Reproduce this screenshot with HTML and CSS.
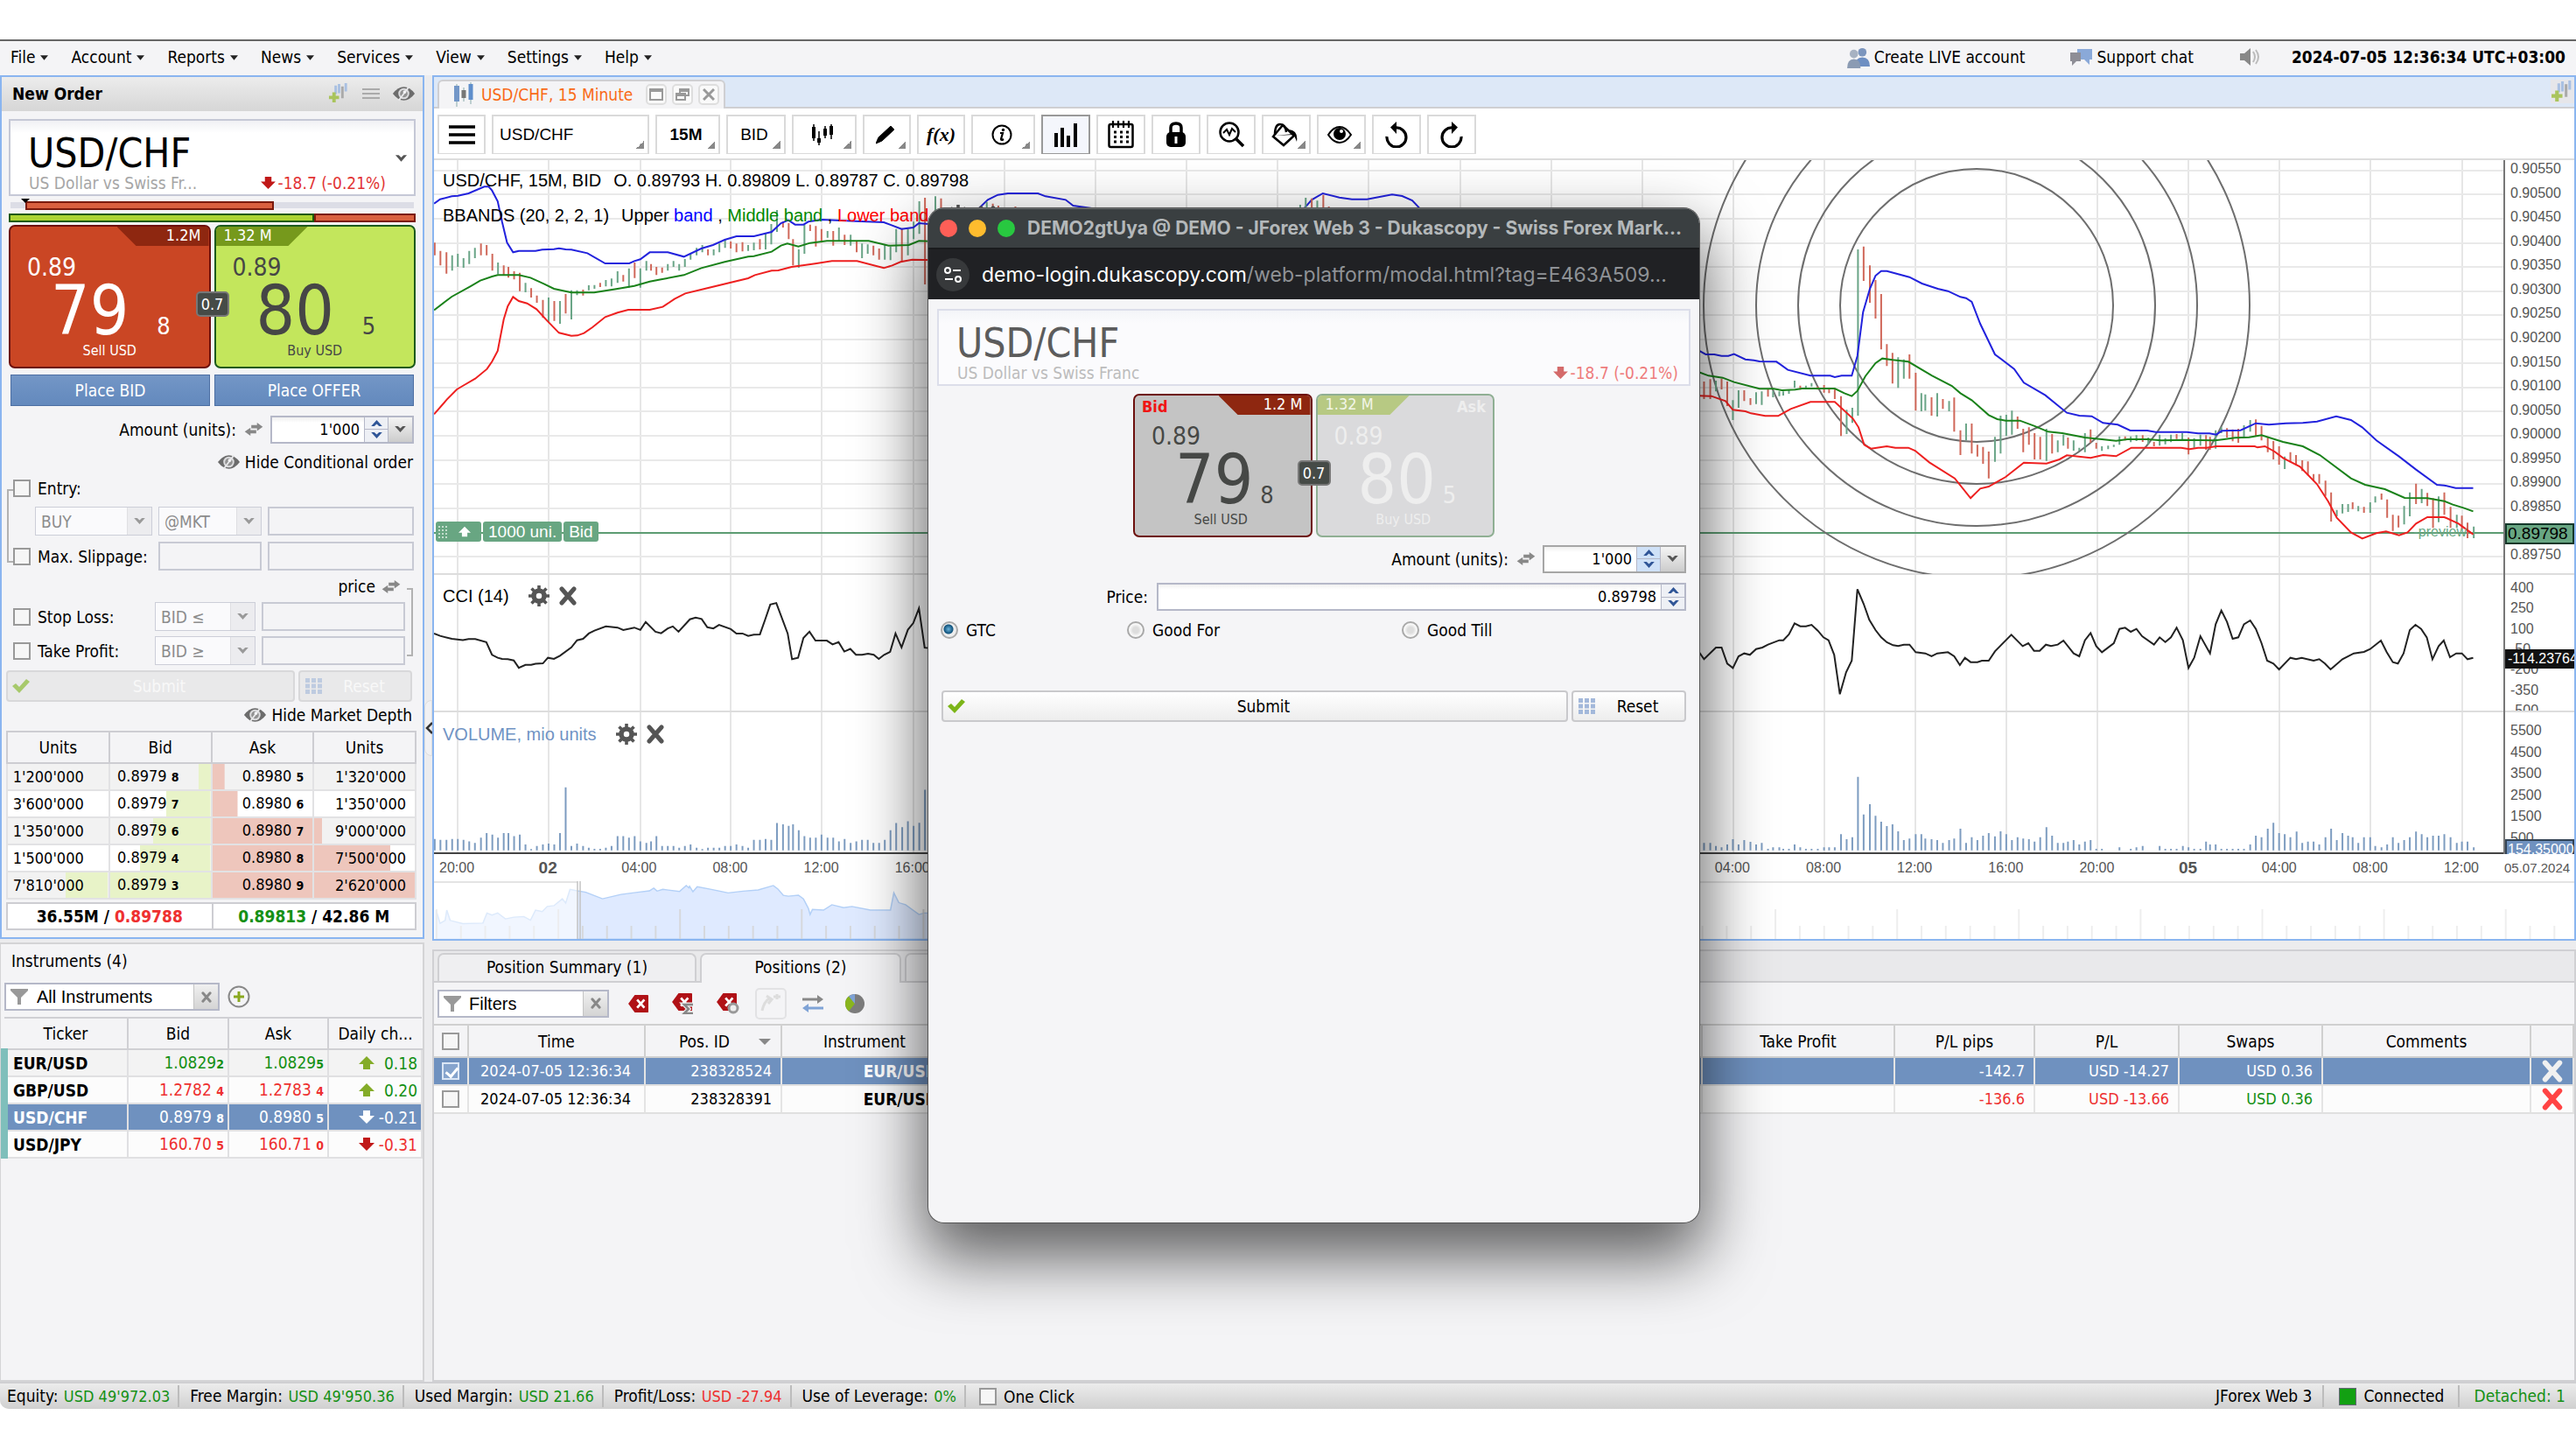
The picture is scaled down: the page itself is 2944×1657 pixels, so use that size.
FILE: index.html
```html
<!DOCTYPE html>
<html lang="en">
<head>
<meta charset="utf-8">
<title>JForex Web 3</title>
<link rel="stylesheet" href="styles.css">
</head>
<body>
<svg class="defs" width="0" height="0" aria-hidden="true">
  <symbol id="caret" viewBox="0 0 10 6"><path d="M0 0H10L5 6Z" fill="#222"/></symbol>
  <symbol id="chev" viewBox="0 0 16 10"><path d="M1 1H5L8 4L11 1H15L8 9Z" fill="currentColor"/></symbol>
  <symbol id="chevup" viewBox="0 0 16 10"><path d="M1 9H5L8 6L11 9H15L8 1Z" fill="currentColor"/></symbol>
  <symbol id="eye" viewBox="0 0 28 18"><path d="M1 9Q7 1 14 1T27 9Q21 17 14 17T1 9Z" fill="#6c6c6c"/><circle cx="14" cy="9" r="6.500" fill="#dcdcde"/><circle cx="14" cy="9" r="4.500" fill="#929292"/><path d="M8 17L20 1" stroke="#e8e8ea" stroke-width="2"/><circle cx="15" cy="7" r="2" fill="#f4f4f6"/></symbol>
  <symbol id="swap" viewBox="0 0 22 16"><path d="M8 3H15V0L22 5L15 10V7H8ZM14 9V13H7V16L0 11L7 6V9Z" fill="#888"/></symbol>
  <symbol id="down" viewBox="0 0 18 15"><path d="M5 0H13V6H18L9 15L0 6H5Z" fill="currentColor"/></symbol>
  <symbol id="up" viewBox="0 0 18 15"><path d="M5 15H13V9H18L9 0L0 9H5Z" fill="currentColor"/></symbol>
  <symbol id="check" viewBox="0 0 20 16"><path d="M0 8L4 5L8 9L16 0L20 3L8 16Z" fill="#7cb518"/></symbol>
  <symbol id="dots" viewBox="0 0 20 18"><path d="M1 0H6V5H1ZM8 0H13V5H8ZM15 0H20V5H15ZM1 6.500H6V11.500H1ZM8 6.500H13V11.500H8ZM15 6.500H20V11.500H15ZM1 13H6V18H1ZM8 13H13V18H8ZM15 13H20V18H15Z" fill="#a3b8da"/></symbol>
  <symbol id="funnel" viewBox="0 0 20 18"><path d="M0 0H20V2L12 10V18H8V10L0 2Z" fill="#999"/></symbol>
  <symbol id="cross" viewBox="0 0 20 22"><path d="M3 3L17 19M17 3L3 19" stroke="currentColor" stroke-width="5" stroke-linecap="round"/></symbol>
  <symbol id="gear" viewBox="0 0 24 24"><circle cx="12" cy="12" r="6" fill="none" stroke="#555" stroke-width="5.500"/><path d="M12 0V24M0 12H24M3.500 3.500L20.500 20.500M20.500 3.500L3.500 20.500" stroke="#555" stroke-width="3.600" stroke-dasharray="4 16 4 0"/></symbol>
  <symbol id="addchart" viewBox="0 0 26 26"><path d="M9 4V14M13 2V13M21 1V11" stroke="#a9c0e2" stroke-width="3"/><path d="M17 5V19" stroke="#aaa" stroke-width="3"/><path d="M1 18H13M7 12V24" stroke="#a9c45c" stroke-width="4"/></symbol>
  <symbol id="people" viewBox="0 0 28 26"><circle cx="18" cy="7" r="5" fill="#7c95bd"/><path d="M10 24Q9 13 18 13T27 24Z" fill="#6e8fc2"/><circle cx="8" cy="9" r="5" fill="#a7b2c2"/><path d="M0 26Q0 15 8 15T16 26Z" fill="#8b9bb3"/></symbol>
  <symbol id="del" viewBox="0 0 26 24"><path d="M8 1H24Q25 1 25 2V22Q25 23 24 23H8L0 12Z" fill="#b01116"/><path d="M11 7L20 17M20 7L11 17" stroke="#fff" stroke-width="3"/></symbol>
</svg>

<div class="app">
  <header class="menubar">
    <nav class="menus">
      <button>File <svg><use href="#caret"/></svg></button>
      <button>Account <svg><use href="#caret"/></svg></button>
      <button>Reports <svg><use href="#caret"/></svg></button>
      <button>News <svg><use href="#caret"/></svg></button>
      <button>Services <svg><use href="#caret"/></svg></button>
      <button>View <svg><use href="#caret"/></svg></button>
      <button>Settings <svg><use href="#caret"/></svg></button>
      <button>Help <svg><use href="#caret"/></svg></button>
    </nav>
    <div class="session">
      <a href="#"><svg width="27" height="25"><use href="#people"/></svg>Create LIVE account</a>
      <a href="#"><svg width="27" height="22" viewBox="0 0 27 22"><path d="M9 2H26V14H23V20L17 14H9Z" fill="#8aa9d8"/><path d="M1 6H13V16H8L3 21V16H1Z" fill="#8e8e96"/></svg>Support chat</a>
      <button class="speaker" aria-label="Sound"><svg width="24" height="22" viewBox="0 0 24 22"><path d="M1 7H6L13 1V21L6 15H1Z" fill="#888"/><path d="M16 5Q20 11 16 17M19 3Q25 11 19 19" stroke="#bbb" stroke-width="2" fill="none"/></svg></button>
      <b class="clock">2024-07-05 12:36:34 UTC+03:00</b>
    </div>
  </header>

  <div class="workspace">
    <aside class="sidebar">
      <section class="order">
        <header class="panel-head"><h2>New Order</h2>
          <span class="head-icons"><svg width="25" height="25"><use href="#addchart"/></svg><svg width="20" height="14" viewBox="0 0 20 14"><path d="M0 2H20M0 7H20M0 12H20" stroke="#aaa" stroke-width="2"/></svg><svg width="27" height="18"><use href="#eye"/></svg></span>
        </header>
        <div class="order-body">
          <div class="symbol">
            <strong>USD/CHF</strong>
            <p><span class="desc">US Dollar vs Swiss Fr...</span><span class="change"><svg width="17" height="14"><use href="#down"/></svg>-18.7 (-0.21%)</span></p>
            <svg class="symbol-chev" width="15" height="10"><use href="#chev"/></svg>
          </div>
          <div class="range"><i></i></div>
          <div class="ratio"><i class="buy"></i><i class="sell"></i></div>
          <div class="tiles">
            <button class="tile sell-tile"><span class="tag">1.2M</span><span class="handle">0.89</span><span class="pips"><b>79</b><i>8</i></span><span class="side">Sell USD</span></button>
            <button class="tile buy-tile"><span class="tag">1.32 M</span><span class="handle">0.89</span><span class="pips"><b>80</b><i>5</i></span><span class="side">Buy USD</span></button>
            <span class="spread">0.7</span>
          </div>
          <div class="place"><button>Place BID</button><button>Place OFFER</button></div>
          <div class="amount">
            <label for="amt">Amount (units):</label><svg class="swap"><use href="#swap"/></svg>
            <span class="spin"><input id="amt" value="1'000"><span class="steps"><button aria-label="Up"><svg><use href="#chevup"/></svg></button><button aria-label="Down"><svg><use href="#chev"/></svg></button></span><button class="drop" aria-label="Presets"><svg><use href="#chev"/></svg></button></span>
          </div>
          <button class="toggle"><svg width="27" height="18"><use href="#eye"/></svg>Hide Conditional order</button>
          <div class="entry-group">
            <label class="tick"><input type="checkbox">Entry:</label>
            <div class="fields entry-fields">
              <span class="pick"><select disabled aria-label="Side"><option>BUY</option></select><svg><use href="#chev"/></svg></span>
              <span class="pick"><select disabled aria-label="Type"><option>@MKT</option></select><svg><use href="#chev"/></svg></span>
              <input disabled aria-label="Entry price">
            </div>
            <div class="fields slip-fields">
              <label class="tick"><input type="checkbox">Max. Slippage:</label>
              <input disabled aria-label="Slippage"><input disabled aria-label="Slippage price">
            </div>
          </div>
          <div class="price-group">
            <p class="price">price <svg class="swap"><use href="#swap"/></svg></p>
            <div class="fields stop-fields">
              <label class="tick"><input type="checkbox">Stop Loss:</label>
              <span class="pick"><select disabled aria-label="Stop side"><option>BID ≤</option></select><svg><use href="#chev"/></svg></span>
              <input disabled aria-label="Stop price">
            </div>
            <div class="fields stop-fields">
              <label class="tick"><input type="checkbox">Take Profit:</label>
              <span class="pick"><select disabled aria-label="Profit side"><option>BID ≥</option></select><svg><use href="#chev"/></svg></span>
              <input disabled aria-label="Profit price">
            </div>
          </div>
          <div class="actions off">
            <button disabled><svg width="20" height="16"><use href="#check"/></svg><span>Submit</span></button>
            <button disabled><svg width="20" height="18"><use href="#dots"/></svg><span>Reset</span></button>
          </div>
          <button class="toggle depth-toggle"><svg width="27" height="18"><use href="#eye"/></svg>Hide Market Depth</button>
          <table class="depth">
            <colgroup><col><col><col><col></colgroup>
            <thead><tr><th>Units</th><th>Bid</th><th>Ask</th><th>Units</th></tr></thead>
            <tbody>
              <tr><td>1'200'000</td><td class="b" style="--d:12%">0.8979 <b>8</b></td><td class="a" style="--d:12%">0.8980 <b>5</b></td><td>1'320'000</td></tr>
              <tr><td>3'600'000</td><td class="b" style="--d:44%">0.8979 <b>7</b></td><td class="a" style="--d:25%">0.8980 <b>6</b></td><td>1'350'000</td></tr>
              <tr><td>1'350'000</td><td class="b" style="--d:57%">0.8979 <b>6</b></td><td class="a" style="--d:100%">0.8980 <b>7</b></td><td class="a" style="--d:8%">9'000'000</td></tr>
              <tr><td>1'500'000</td><td class="b" style="--d:70%">0.8979 <b>4</b></td><td class="a" style="--d:100%">0.8980 <b>8</b></td><td class="a" style="--d:76%">7'500'000</td></tr>
              <tr><td class="b" style="--d:42%">7'810'000</td><td class="b" style="--d:100%">0.8979 <b>3</b></td><td class="a" style="--d:100%">0.8980 <b>9</b></td><td class="a" style="--d:100%">2'620'000</td></tr>
            </tbody>
          </table>
          <div class="totals"><b>36.55M / <span class="neg">0.89788</span></b><b><span class="pos">0.89813</span> / 42.86 M</b></div>
        </div>
      </section>

      <section class="instruments">
        <h3>Instruments (4)</h3>
        <div class="filter-row">
          <span class="filter"><svg width="20" height="18"><use href="#funnel"/></svg><input value="All Instruments" aria-label="Instrument filter"><button aria-label="Clear"><svg width="12" height="13"><use href="#cross"/></svg></button></span>
          <button class="plus" aria-label="Add"><svg width="26" height="26" viewBox="0 0 26 26"><circle cx="13" cy="13" r="11.500" fill="#f4f4f6" stroke="#888" stroke-width="2"/><path d="M7 13H19M13 7V19" stroke="#8aa820" stroke-width="3"/></svg></button>
        </div>
        <table class="quotes">
          <colgroup><col class="q1"><col class="q2"><col class="q3"><col></colgroup>
          <thead><tr><th>Ticker</th><th>Bid</th><th>Ask</th><th>Daily ch...</th></tr></thead>
          <tbody>
            <tr class="pos"><td>EUR/USD</td><td>1.0829<b>2</b></td><td>1.0829<b>5</b></td><td><svg class="arr up"><use href="#up"/></svg>0.18</td></tr>
            <tr class="neg"><td>GBP/USD</td><td>1.2782 <b>4</b></td><td>1.2783 <b>4</b></td><td class="pos"><svg class="arr up"><use href="#up"/></svg>0.20</td></tr>
            <tr class="picked"><td>USD/CHF</td><td>0.8979 <b>8</b></td><td>0.8980 <b>5</b></td><td><svg class="arr"><use href="#down"/></svg>-0.21</td></tr>
            <tr class="neg"><td>USD/JPY</td><td>160.70 <b>5</b></td><td>160.71 <b>0</b></td><td><svg class="arr dn"><use href="#down"/></svg>-0.31</td></tr>
          </tbody>
        </table>
      </section>
    </aside>

    <div class="gutter"><button class="collapse" aria-label="Collapse"><svg width="9" height="14" viewBox="0 0 9 14"><path d="M8 1L2 7L8 13" stroke="#333" stroke-width="2.500" fill="none"/></svg></button></div>

    <main class="main">
      <section class="chart">
        <div class="tabstrip">
          <div class="chart-tab">
            <svg width="24" height="28" viewBox="0 0 24 28"><path d="M4 2V28M12 6V22M20 0V25" stroke="#8aa" stroke-width="1"/><path d="M4 4V22" stroke="#7397c8" stroke-width="6"/><path d="M12 9V18" stroke="#777" stroke-width="5"/><path d="M20 2V20" stroke="#5f8ecb" stroke-width="5"/></svg>
            <span>USD/CHF, 15 Minute</span>
            <button aria-label="Maximize"><svg width="16" height="14" viewBox="0 0 16 14"><path d="M1 1H15V13H1ZM1 3H15" stroke="#999" stroke-width="2" fill="none"/></svg></button>
            <button aria-label="Detach"><svg width="16" height="14" viewBox="0 0 16 14"><path d="M5 1H15V8H5ZM1 6H11V13H1ZM5 3H15M1 8H11" stroke="#999" stroke-width="2" fill="none"/></svg></button>
            <button aria-label="Close"><svg width="14" height="14" viewBox="0 0 14 14"><path d="M1 1L13 13M13 1L1 13" stroke="#999" stroke-width="3"/></svg></button>
          </div>
          <svg class="strip-add" width="27" height="27"><use href="#addchart"/></svg>
        </div>
        <div class="toolbar">
          <button class="w55" aria-label="Menu"><svg width="30" height="24" viewBox="0 0 30 24"><path d="M0 3H30M0 12H30M0 21H30" stroke="#000" stroke-width="3.500"/></svg></button>
          <button class="w180 more">USD/CHF</button>
          <button class="w74 more"><b>15M</b></button>
          <button class="w68 more">BID</button>
          <button class="w74 more" aria-label="Chart type"><svg width="26" height="24" viewBox="0 0 26 24"><path d="M3 0V19M9 8V24M16 2V16M23 0V17" stroke="#000" stroke-width="1.500"/><path d="M3 3V16M9 16V21M16 5V13M23 2V12" stroke="#000" stroke-width="4"/></svg></button>
          <button class="w55 more" aria-label="Draw"><svg width="22" height="22" viewBox="0 0 22 22"><path d="M17 1L21 5L7 18L0 21L3 14ZM4 15L7 18" fill="#000" stroke="#000"/></svg></button>
          <button class="w55 fx">f(x)</button>
          <button class="w73 more" aria-label="Info"><svg width="24" height="24" viewBox="0 0 24 24"><circle cx="12" cy="12" r="10.500" fill="none" stroke="#000" stroke-width="2"/><circle cx="13.500" cy="6.500" r="1.700"/><path d="M10 10H13L11 17Q11 19 14 17" stroke="#000" stroke-width="2.200" fill="none"/></svg></button>
          <button class="on" aria-label="Volume"><svg width="28" height="28" viewBox="0 0 28 28"><path d="M3 12V28M10 6V28M17 15V28M25 1V28" stroke="#000" stroke-width="4"/></svg></button>
          <button aria-label="Calendar"><svg width="30" height="32" viewBox="0 0 30 32"><rect x="1.500" y="4" width="27" height="26" rx="2" fill="none" stroke="#000" stroke-width="2.500"/><path d="M6 0V8M12 0V8M18 0V8M24 0V8" stroke="#000" stroke-width="2.200"/><path d="M7 13H24M7 18.500H24M7 24H24" stroke="#000" stroke-width="3" stroke-dasharray="3 4"/></svg></button>
          <button aria-label="Lock"><svg width="24" height="30" viewBox="0 0 24 30"><path d="M6 14V7Q6 2 12 2T18 7V14" fill="none" stroke="#000" stroke-width="3.500"/><rect x="1" y="12" width="22" height="17" rx="5"/><path d="M12 17V25" stroke="#fff" stroke-width="3"/></svg></button>
          <button aria-label="Zoom"><svg width="29" height="30" viewBox="0 0 29 30"><circle cx="12" cy="12" r="10.500" fill="none" stroke="#000" stroke-width="2.500"/><path d="M5 13L9 9L12 15L15 8L19 12" fill="none" stroke="#000" stroke-width="2"/><path d="M20 20L28 28" stroke="#000" stroke-width="3.500"/></svg></button>
          <button class="more" aria-label="Fill"><svg width="30" height="28" viewBox="0 0 30 28"><path d="M13 3L26 15L14 26L2 16Z" fill="none" stroke="#000" stroke-width="2.500"/><path d="M4 14Q4 2 10 2T17 11" fill="none" stroke="#000" stroke-width="2.500"/><path d="M4 15L25 13L20 8Q31 9 29 22Q26 14 25 14Z"/></svg></button>
          <button class="more" aria-label="View"><svg width="28" height="20" viewBox="0 0 28 20"><path d="M1 10Q7 1 14 1T27 10Q21 19 14 19T1 10Z" fill="none" stroke="#000" stroke-width="2"/><circle cx="14" cy="9" r="7"/><circle cx="16" cy="6" r="2" fill="#fff"/></svg></button>
          <button aria-label="Undo"><svg width="26" height="30" viewBox="0 0 26 30"><path d="M2 17A11 11 0 1 0 12 7" fill="none" stroke="#000" stroke-width="3.200"/><path d="M13 0V14L6 6.500Z"/></svg></button>
          <button aria-label="Redo"><svg width="26" height="30" viewBox="0 0 26 30"><path d="M24 17A11 11 0 1 1 14 7" fill="none" stroke="#000" stroke-width="3.200"/><path d="M13 0V14L20 6.500Z"/></svg></button>
        </div>

        <div class="plot-grid">
          <div class="plot">
            <svg class="plot-svg" viewBox="496 183 2365 791" preserveAspectRatio="none" aria-hidden="true">
              <defs>
                <clipPath id="mainclip"><rect x="496" y="183" width="2365" height="473"/></clipPath>
              </defs>
              <path d="M523 183V974M627 183V974M732 183V974M835 183V974M939 183V974M1044 183V974M1148 183V974M1252 183V974M1356 183V974M1460 183V974M1564 183V974M1669 183V974M1773 183V974M1877 183V974M1981 183V974M2085 183V974M2189 183V974M2293 183V974M2397 183V974M2501 183V974M2605 183V974M2709 183V974M2814 183V974" stroke="#e6e6e6" stroke-width="2"/>
              <path d="M496 195H2861M496 222H2861M496 250H2861M496 278H2861M496 305H2861M496 333H2861M496 360H2861M496 388H2861M496 415H2861M496 443H2861M496 470H2861M496 498H2861M496 526H2861M496 553H2861M496 581H2861M496 636H2861" stroke="#e9e9e9" stroke-width="2"/>
              <path d="M496 656H2861M496 813H2861" stroke="#ddd" stroke-width="2"/>
              <path d="M496 609H2861" stroke="#5c9c72" stroke-width="2"/>
              <g class="rings" clip-path="url(#mainclip)"><circle cx="2259" cy="349" r="156"/><circle cx="2259" cy="349" r="204"/><circle cx="2259" cy="349" r="252"/><circle cx="2259" cy="349" r="312"/></g>
              <g class="ln" transform="translate(480 40) scale(.38271 .33333)">
                <path class="cr" d="M44 712V755M61 740V790M79 745V818M182 715V755M199 720V755M216 750V808M250 790V825M264 795V832M281 810V838M298 815V878M332 868V900M349 893V918M367 908V970M401 912V980M435 888V955M487 873V893M538 850V864M607 823V845M641 780V833M690 785V808M706 795V823M723 797V815M860 735V755M928 708V732M945 715V745M963 710V742M1015 700V735M1084 640V660M1101 645V700M1114 700V790M1165 650V672M1182 655V725M1199 665V712M1234 672V722M1268 685V720M1304 705V745M1354 722V755M1371 732V770M1439 662V778M1508 558V855M1556 560V605"/>
                <path class="cg" d="M96 755V808M113 750V795M130 765V798M147 740V785M164 730V765M233 780V820M315 850V882M384 900V985M418 912V990M452 875V975M469 875V892M504 858V875M521 857V870M555 840V862M572 835V862M590 810V850M624 800V866M658 800V866M676 775V808M740 785V808M757 775V795M774 785V808M791 768V795M808 750V770M826 730V755M843 720V745M877 735V755M894 715V745M911 700V730M980 720V740M997 712V738M1032 680V735M1049 648V718M1066 600V675M1131 735V798M1148 650V750M1217 672V695M1251 660V705M1286 685V722M1320 715V765M1337 718V750M1388 720V770M1405 725V772M1422 665V745M1457 665V755M1474 640V700M1491 570V682M1539 553V610"/>
                <polyline class="up" points="42,578 60,563 95,553 113,551 145,543 192,520 205,520 215,533 232,570 245,640 260,712 278,745 295,740 345,740 365,736 400,734 415,731 435,735 452,736 500,748 553,783 625,783 640,775 658,769 686,745 740,745 788,760 840,732 875,720 910,702 945,690 997,690 1050,675 1078,645 1100,635 1120,650 1145,650 1160,640 1200,633 1300,638 1385,642 1438,665 1473,660 1490,645 1540,650"/>
                <polyline class="mid" points="42,943 95,897 150,862 180,842 215,828 232,823 295,823 330,832 370,853 400,870 452,883 520,883 590,870 640,860 686,845 720,838 788,823 840,799 910,778 980,760 997,758 1050,743 1078,722 1097,715 1130,725 1165,713 1215,706 1340,706 1400,722 1460,720 1490,706 1540,708"/>
                <polyline class="low" points="42,1300 80,1250 110,1215 132,1200 165,1178 200,1145 215,1120 232,1083 250,975 262,930 278,898 295,912 320,920 348,940 380,980 415,1021 452,1031 470,1030 490,1022 515,1002 553,967 590,952 622,942 686,942 725,932 760,905 792,886 850,870 980,834 1000,823 1050,808 1070,807 1110,795 1180,784 1230,775 1305,775 1385,799 1410,790 1435,778 1470,770 1540,772"/>
              </g>
              <g class="ln" transform="translate(1060 40) scale(.57405 .33333)">
                <polyline class="up" points="80,640 100,598 120,565 140,548 160,543 220,543 235,553 275,565 290,585 330,595 360,600"/>
                <polyline class="up" points="730,640 748,598 765,565 787,543 820,557 845,563 875,563 925,547 945,552 965,567 982,598 1000,640"/>
                <path class="cr" d="M130 578V600M141 585V600M175 588V600M765 560V600M788 548V600M799 588V600"/><path class="cg" d="M118 572V600M742 582V600M753 558V600M776 568V600"/>
              </g>
              <g class="ln" transform="translate(1930 160) scale(.64683 .33333)">
                <path class="cr" d="M27 828V888M38 820V888M58 818V855M68 828V912M98 858V895M109 885V908M140 855V880M197 842V856M228 845V856M239 840V866M248 850V868M258 852V888M269 878V1015M309 365V483M320 430V558M330 480V612M340 528V718M350 700V775M360 730V835M390 735V818M401 798V928M429 882V945M449 888V922M469 883V1000M480 995V1080M500 972V1075M510 1045V1085M520 1052V1110M530 1068V1160M581 948V990M591 990V1070M601 985V1045M611 1005V1095M621 1018V1095M642 1008V1075M670 1020V1058M710 992V1038M720 1038V1058M771 1016V1030M802 1012V1035M822 1035V1050M862 1008V1025M883 1020V1078M914 1012V1062M921 1018V1062M951 988V1020M961 992V1033M971 990V1038M1002 958V1015M1012 980V1030M1023 1020V1070M1033 1032V1095M1043 1050V1113M1063 1070V1105M1073 1080V1115M1084 1098V1135M1094 1102V1150M1104 1145V1170M1114 1145V1178M1125 1168V1220M1135 1208V1308M1173 1242V1265M1193 1258V1278M1224 1212V1233M1234 1232V1295M1244 1285V1340M1254 1288V1328M1285 1178V1248M1305 1210V1255M1315 1228V1330M1335 1208V1285M1346 1258V1330M1366 1288V1335M1376 1312V1365"/>
                <path class="cg" d="M48 825V862M78 892V960M88 858V918M119 865V905M129 862V908M149 860V882M160 862V878M167 862V876M177 858V870M187 825V850M207 842V855M217 833V845M279 925V1008M289 918V970M299 375V945M370 745V850M380 752V818M411 868V930M418 872V928M439 868V948M460 895V930M490 972V1030M541 1018V1103M551 945V1075M561 942V1015M571 928V1010M632 990V1100M652 1030V1070M662 1010V1048M680 1030V1065M690 1055V1065M700 1005V1070M730 1050V1066M741 1048V1060M751 1045V1052M761 1016V1045M781 1016V1036M791 1012V1032M812 1020V1045M832 1010V1048M842 1022V1043M852 1010V1036M872 1005V1030M893 1022V1055M904 1010V1048M931 995V1058M941 985V1005M981 978V1018M992 960V1000M1053 1085V1128M1145 1268V1290M1155 1248V1280M1165 1248V1275M1183 1255V1273M1204 1242V1278M1213 1222V1243M1264 1255V1318M1274 1208V1290M1295 1196V1245M1325 1222V1310M1357 1285V1330M1387 1325V1365"/>
                <polyline class="up" points="0,700 18,722 30,735 45,735 58,740 70,740 80,734 100,752 115,755 125,759 155,760 175,788 215,808 250,808 258,813 270,808 288,808 298,740 308,590 320,510 330,465 340,449 350,449 390,470 412,492 440,510 458,518 480,538 490,542 500,555 515,630 541,735 575,785 592,832 630,875 668,935 690,945 712,947 732,970 758,976 780,996 810,996 825,1001 880,1001 900,1006 920,1006 932,1010 942,997 975,995 1002,971 1025,976 1055,971 1085,970 1110,965 1144,947 1170,960 1190,985 1215,1030 1255,1085 1285,1130 1322,1182 1335,1184 1355,1193 1386,1193"/>
                <polyline class="mid" points="0,790 18,796 35,808 60,815 80,830 125,853 150,853 165,858 188,856 200,852 258,852 275,868 288,878 298,860 312,810 330,765 342,749 360,754 388,760 430,808 465,843 480,868 500,892 530,943 545,957 560,962 585,962 610,980 635,1000 660,1005 700,1020 730,1026 755,1031 775,1026 810,1026 835,1030 875,1028 930,1030 965,1021 990,1019 1012,1012 1050,1035 1085,1050 1115,1080 1170,1160 1195,1182 1230,1197 1265,1227 1305,1228 1335,1238 1350,1250 1370,1262 1386,1273"/>
                <polyline class="low" points="0,876 18,877 40,878 65,895 78,925 100,930 110,937 135,946 158,946 180,922 215,898 258,898 290,955 300,985 310,1045 322,1058 350,1050 365,1055 388,1055 400,1065 425,1105 470,1160 498,1228 515,1195 530,1188 560,1155 592,1106 632,1109 655,1095 668,1081 710,1090 732,1080 755,1084 782,1055 870,1055 885,1060 900,1055 915,1055 932,1050 1000,1050 1005,1054 1018,1050 1035,1068 1050,1090 1080,1120 1110,1180 1130,1240 1145,1295 1170,1345 1190,1366 1215,1348 1232,1342 1255,1355 1270,1345 1285,1315 1305,1293 1335,1293 1360,1315 1386,1352"/>
              </g>
              <g class="ln" transform="translate(480 560) scale(.38271 .33801)">
                <polyline class="cci" points="42,485 60,493 95,503 128,507 145,504 165,504 198,514 215,557 232,567 245,571 262,572 280,576 295,601 315,591 332,591 345,587 367,586 382,567 400,571 418,560 452,532 469,508 487,503 504,485 521,475 555,461 590,465 607,473 640,465 658,473 674,446 703,479 720,484 740,468 755,461 772,479 806,437 823,431 841,436 858,464 876,468 893,456 928,470 945,485 963,485 980,493 997,489 1015,488 1030,440 1046,387 1064,382 1098,485 1111,572 1129,567 1145,500 1163,479 1181,509 1215,509 1232,522 1250,514 1267,546 1285,537 1302,557 1320,557 1338,553 1355,557 1370,571 1386,557 1404,547 1420,485 1438,532 1457,472 1473,450 1490,400 1507,533 1540,536"/>
                <path class="vol" d="M44 1218V1180M61 1218V1183M79 1218V1183M96 1218V1180M113 1218V1180M130 1218V1183M147 1218V1188M164 1218V1193M182 1218V1175M199 1218V1160M216 1218V1165M233 1218V1175M250 1218V1160M264 1218V1160M281 1218V1170M298 1218V1165M315 1218V1198M332 1218V1214M349 1218V1203M367 1218V1198M384 1218V1195M401 1218V1198M418 1218V1160M435 1218V1005M452 1218V1203M469 1218V1195M487 1218V1203M504 1218V1209M521 1218V1213M538 1218V1213M555 1218V1209M572 1218V1203M590 1218V1170M607 1218V1170M624 1218V1175M641 1218V1170M658 1218V1188M676 1218V1193M690 1218V1188M706 1218V1170M723 1218V1203M740 1218V1203M757 1218V1203M774 1218V1209M791 1218V1203M808 1218V1198M826 1218V1209M843 1218V1214M860 1218V1209M877 1218V1209M894 1218V1209M911 1218V1203M928 1218V1203M945 1218V1198M963 1218V1203M980 1218V1209M997 1218V1183M1015 1218V1183M1032 1218V1180M1049 1218V1183M1066 1218V1126M1084 1218V1130M1101 1218V1135M1114 1218V1130M1131 1218V1150M1148 1218V1170M1165 1218V1175M1182 1218V1175M1199 1218V1165M1217 1218V1175M1234 1218V1175M1251 1218V1188M1268 1218V1180M1286 1218V1193M1303 1218V1188M1320 1218V1183M1337 1218V1183M1354 1218V1193M1371 1218V1193M1388 1218V1183M1405 1218V1150M1422 1218V1126M1440 1218V1140M1457 1218V1120M1474 1218V1135M1491 1218V1125M1508 1218V1013"/>
              </g>
              <g class="ln" transform="translate(1930 640) scale(.64683 .33333)">
                <polyline class="cci" points="0,290 18,315 27,340 48,300 58,300 68,355 78,370 88,330 98,320 108,325 119,305 130,300 140,290 160,275 167,275 177,255 187,217 197,227 207,227 217,222 228,242 238,265 247,275 257,325 267,460 278,385 288,345 298,100 309,150 319,205 330,240 340,265 350,282 361,292 370,295 380,290 390,290 401,316 418,320 429,330 439,320 458,316 469,330 479,360 488,335 498,350 510,350 518,345 530,345 541,313 570,256 590,295 600,285 610,311 620,311 631,290 640,295 652,290 662,276 680,320 690,330 700,275 710,250 720,295 730,316 751,285 761,236 771,232 781,246 791,236 801,261 822,290 832,265 842,281 852,265 862,232 873,275 883,370 893,335 904,261 921,320 931,220 941,173 951,212 961,270 971,265 981,220 992,207 1002,236 1012,285 1022,345 1033,355 1043,375 1063,335 1073,340 1083,335 1104,345 1114,340 1124,355 1134,375 1155,340 1175,320 1193,315 1204,305 1223,276 1233,315 1244,350 1253,355 1263,320 1274,240 1284,222 1294,236 1304,265 1314,340 1325,295 1334,276 1345,333 1356,320 1366,320 1376,340 1386,335"/>
                <path class="vol" d="M27 995V970M38 995V970M48 995V980M58 995V985M68 995V975M78 995V957M88 995V975M98 995V960M109 995V966M119 995V975M129 995V970M140 995V990M149 995V985M160 995V985M167 995V990M177 995V990M187 995V975M197 995V985M207 995V990M217 995V990M228 995V990M239 995V985M248 995V985M258 995V985M269 995V940M279 995V957M289 995V950M299 995V743M309 995V872M320 995V837M330 995V877M340 995V897M350 995V912M360 995V906M370 995V930M380 995V960M390 995V955M401 995V940M411 995V940M418 995V955M429 995V957M439 995V960M449 995V970M460 995V960M469 995V955M480 995V921M490 995V970M500 995V950M510 995V960M520 995V945M530 995V936M541 995V947M551 995V930M561 995V940M571 995V960M581 995V950M591 995V955M601 995V957M611 995V965M621 995V950M632 995V916M642 995V945M652 995V970M662 995V970M670 995V965M680 995V960M690 995V975M700 995V965M710 995V960M720 995V990M730 995V990M761 995V985M781 995V990M791 995V985M802 995V980M832 995V980M842 995V990M852 995V990M862 995V990M873 995V980M883 995V985M893 995V990M904 995V990M914 995V965M921 995V975M931 995V975M941 995V990M951 995V990M961 995V990M971 995V990M981 995V990M992 995V975M1002 995V945M1012 995V950M1023 995V921M1033 995V901M1043 995V936M1053 995V940M1063 995V950M1074 995V931M1084 995V970M1094 995V965M1104 995V965M1114 995V975M1125 995V950M1135 995V921M1145 995V960M1155 995V936M1165 995V945M1173 995V950M1183 995V970M1193 995V950M1204 995V950M1213 995V980M1224 995V985M1234 995V975M1244 995V950M1254 995V970M1264 995V960M1274 995V950M1285 995V931M1295 995V940M1305 995V950M1315 995V945M1325 995V945M1335 995V940M1346 995V950M1357 995V970M1366 995V965M1376 995V965M1387 995V985"/>
              </g>
            </svg>
            <div class="legend ohlc"><span>USD/CHF, 15M, BID</span><span>O. 0.89793 H. 0.89809 L. 0.89787 C. 0.89798</span></div>
            <div class="legend bands"><span>BBANDS (20, 2, 2, 1)</span><span>Upper <i class="c-up">band</i> , <i class="c-mid">Middle band</i> , <i class="c-low">Lower band</i></span><svg width="24" height="24"><use href="#gear"/></svg><svg width="20" height="22"><use href="#cross"/></svg></div>
            <div class="legend cci-legend"><span>CCI (14)</span><svg width="24" height="24"><use href="#gear"/></svg><svg width="20" height="22"><use href="#cross"/></svg></div>
            <div class="legend vol-legend"><span>VOLUME, mio units</span><svg width="24" height="24"><use href="#gear"/></svg><svg width="20" height="22"><use href="#cross"/></svg></div>
            <div class="order-line"><span class="grip"><svg width="10" height="14" viewBox="0 0 10 14"><path d="M1 0V14M5 0V14M9 0V14" stroke="#dff0e5" stroke-width="1.500" stroke-dasharray="2 2"/></svg><svg width="14" height="13" class="w"><use href="#up"/></svg></span><span>1000 uni.</span><span>Bid</span></div>
            <span class="preview">-preview</span>
          </div>
          <div class="scale">
            <div class="pane p-main"><span>0.90550</span><span>0.90500</span><span>0.90450</span><span>0.90400</span><span>0.90350</span><span>0.90300</span><span>0.90250</span><span>0.90200</span><span>0.90150</span><span>0.90100</span><span>0.90050</span><span>0.90000</span><span>0.89950</span><span>0.89900</span><span>0.89850</span><i class="slot"></i><span>0.89750</span><span class="mark">0.89798</span></div>
            <div class="pane p-cci"><span>400</span><span>250</span><span>100</span><span>-50</span><span>-200</span><span>-350</span><span class="last-tick">-500</span><span class="mark">-114.23764</span></div>
            <div class="pane p-vol"><span>5500</span><span>4500</span><span>3500</span><span>2500</span><span>1500</span><span>500</span><span class="mark">154.35000</span></div>
          </div>
          <div class="times"><span>20:00</span><b>02</b><span>04:00</span><span>08:00</span><span>12:00</span><span>16:00</span><span>20:00</span><b>03</b><span>04:00</span><span>08:00</span><span>12:00</span><span>16:00</span><span>20:00</span><b>04</b><span>04:00</span><span>08:00</span><span>12:00</span><span>16:00</span><span>20:00</span><b>05</b><span>04:00</span><span>08:00</span><span>12:00</span></div>
          <span class="date">05.07.2024</span>
        </div>
        <svg class="navigator" viewBox="496 1007 2446 66" preserveAspectRatio="none" aria-hidden="true">
          <defs><pattern id="ticks" x="498" y="1007" width="139.100" height="66" patternUnits="userSpaceOnUse"><path d="M1 32V66M28.800 51V66M56.600 51V66M84.400 51V66M112.200 51V66" stroke="#d4d4d4" stroke-width="1.600"/></pattern></defs>
          <g transform="translate(480 560) scale(.38271 .33801)"><path d="M48,1518 48,1420 60,1465 75,1455 80,1420 90,1455 128,1466 188,1464 200,1430 215,1437 232,1430 255,1450 280,1444 310,1442 330,1454 345,1420 365,1425 380,1408 400,1405 425,1382 435,1396 448,1350 470,1355 495,1360 545,1382 600,1367 650,1360 685,1355 698,1346 708,1356 725,1350 775,1357 795,1337 803,1345 805,1340 815,1358 828,1341 870,1350 920,1362 965,1356 1010,1352 1055,1337 1068,1348 1085,1370 1100,1373 1130,1370 1145,1382 1160,1415 1165,1435 1172,1418 1205,1420 1230,1402 1265,1412 1290,1408 1345,1420 1405,1420 1415,1362 1430,1395 1450,1402 1490,1435 1505,1430 1600,1430 1600,1518Z" fill="#dfeaff" stroke="#b3d0f7" stroke-width="4"/></g>
          <rect x="496" y="1007" width="2446" height="66" fill="url(#ticks)"/>
          <rect x="496" y="1007" width="164" height="66" fill="#fff" opacity=".55"/>
          <rect x="1940" y="1007" width="1002" height="66" fill="#fff" opacity=".5"/>
          <path d="M496 1008H660M1600 1008H2942" stroke="#e4e4e4" stroke-width="2"/>
          <path d="M660 1007V1073M663 1007V1073" stroke="#c4c4c4" stroke-width="1.500"/>
        </svg>
      </section>

      <section class="positions">
        <div class="ptabs"><button>Position Summary (1)</button><button class="current">Positions (2)</button><button class="third" aria-label="Orders"></button></div>
        <div class="ptools">
          <span class="filter"><svg width="20" height="18"><use href="#funnel"/></svg><input value="Filters" aria-label="Position filter"><button aria-label="Clear"><svg width="12" height="13"><use href="#cross"/></svg></button></span>
          <button aria-label="Close position"><svg width="26" height="22"><use href="#del"/></svg></button>
          <button aria-label="Close and merge"><svg width="27" height="25" viewBox="0 0 27 25"><use href="#del" width="26" height="22"/><path d="M25 14H15L20 19L15 24H25" stroke="#eee" stroke-width="5" fill="none"/><path d="M25 14H15L20 19L15 24H25" stroke="#888" stroke-width="2.500" fill="none"/></svg></button>
          <button aria-label="Close with settings"><svg width="27" height="25" viewBox="0 0 27 25"><use href="#del" width="26" height="22"/><circle cx="20" cy="18" r="5" fill="#eee" stroke="#999" stroke-width="3"/></svg></button>
          <button class="boxed" aria-label="Hedge"><svg width="24" height="24" viewBox="0 0 24 24"><path d="M2 20Q4 10 10 6M7 3L13 7L9 12M15 4H23M19 1V7" stroke="#ddd" stroke-width="3" fill="none"/></svg></button>
          <button aria-label="Exchange"><svg width="24" height="20" viewBox="0 0 24 20"><path d="M0 5H20" stroke="#888" stroke-width="3"/><path d="M17 0L24 5L17 10Z" fill="#888"/><path d="M24 15H4" stroke="#7fa3d6" stroke-width="3"/><path d="M7 10L0 15L7 20Z" fill="#7fa3d6"/></svg></button>
          <button aria-label="Statistics"><svg width="24" height="24" viewBox="0 0 24 24"><circle cx="12" cy="12" r="11" fill="#7d7d7d"/><path d="M12 12L5 3.500A11 11 0 0 0 5 20.500Z" fill="#8ab61e"/><path d="M12 12L5 3.500A11 11 0 0 1 12 1Z" fill="#7fa3d6"/></svg></button>
        </div>
        <table class="ptable">
          <colgroup><col class="p0"><col class="p1"><col class="p2"><col class="p3"><col><col class="p5"><col class="p6"><col class="p7"><col class="p8"><col class="p9"><col class="p10"></colgroup>
          <thead><tr><th><input type="checkbox" aria-label="All"></th><th>Time</th><th class="sort">Pos. ID</th><th>Instrument</th><th></th><th>Take Profit</th><th>P/L pips</th><th>P/L</th><th>Swaps</th><th>Comments</th><th></th></tr></thead>
          <tbody>
            <tr class="picked"><td><input type="checkbox" checked aria-label="238328524"></td><td>2024-07-05 12:36:34</td><td>238328524</td><td><b>EUR/USD</b></td><td></td><td></td><td>-142.7</td><td>USD -14.27</td><td>USD 0.36</td><td></td><td><svg width="24" height="26"><use href="#cross"/></svg></td></tr>
            <tr><td><input type="checkbox" aria-label="238328391"></td><td>2024-07-05 12:36:34</td><td>238328391</td><td><b>EUR/USD</b></td><td></td><td></td><td class="neg">-136.6</td><td class="neg">USD -13.66</td><td class="pos">USD 0.36</td><td></td><td class="kill"><svg width="24" height="26"><use href="#cross"/></svg></td></tr>
          </tbody>
        </table>
      </section>
    </main>
  </div>

  <footer class="status">
    <span>Equity: <i class="pos">USD 49'972.03</i></span>
    <span>Free Margin: <i class="pos">USD 49'950.36</i></span>
    <span>Used Margin: <i class="pos">USD 21.66</i></span>
    <span>Profit/Loss: <i class="neg">USD -27.94</i></span>
    <span>Use of Leverage: <i class="pos">0%</i></span>
    <label class="tick"><input type="checkbox">One Click</label>
    <span class="push">JForex Web 3</span>
    <span class="conn"><i class="lamp"></i>Connected</span>
    <span class="last pos">Detached: 1</span>
  </footer>

  <div class="window" role="dialog" aria-label="Place bid">
    <div class="titlebar"><i class="r"></i><i class="y"></i><i class="g"></i><b>DEMO2gtUya @ DEMO - JForex Web 3 - Dukascopy - Swiss Forex Mark...</b></div>
    <div class="urlbar"><span class="site"><svg width="20" height="18" viewBox="0 0 20 18"><circle cx="4" cy="4" r="3" fill="none" stroke="#fff" stroke-width="2"/><circle cx="16" cy="14" r="3" fill="none" stroke="#fff" stroke-width="2"/><path d="M10 4H19M1 14H10" stroke="#fff" stroke-width="2.200"/></svg></span><span class="url"><em>demo-login.dukascopy.com</em>/web-platform/modal.html?tag=E463A509...</span></div>
    <div class="window-body">
      <div class="symbol dim">
        <strong>USD/CHF</strong>
        <p><span class="desc">US Dollar vs Swiss Franc</span><span class="change"><svg width="17" height="14"><use href="#down"/></svg>-18.7 (-0.21%)</span></p>
      </div>
      <div class="tiles">
        <button class="tile sell-tile"><span class="tag">1.2 M</span><span class="corner">Bid</span><span class="handle">0.89</span><span class="pips"><b>79</b><i>8</i></span><span class="side">Sell USD</span></button>
        <button class="tile buy-tile"><span class="tag">1.32 M</span><span class="corner">Ask</span><span class="handle">0.89</span><span class="pips"><b>80</b><i>5</i></span><span class="side">Buy USD</span></button>
        <span class="spread">0.7</span>
      </div>
      <div class="amount">
        <label for="wamt">Amount (units):</label><svg class="swap"><use href="#swap"/></svg>
        <span class="spin focus"><input id="wamt" value="1'000"><span class="steps"><button aria-label="Up"><svg><use href="#chevup"/></svg></button><button aria-label="Down"><svg><use href="#chev"/></svg></button></span><button class="drop" aria-label="Presets"><svg><use href="#chev"/></svg></button></span>
      </div>
      <div class="wprice">
        <label for="wprice">Price:</label>
        <span class="spin"><input id="wprice" value="0.89798"><span class="steps"><button aria-label="Up"><svg><use href="#chevup"/></svg></button><button aria-label="Down"><svg><use href="#chev"/></svg></button></span></span>
      </div>
      <div class="tif">
        <label><input type="radio" name="tif" checked>GTC</label><label><input type="radio" name="tif">Good For</label><label><input type="radio" name="tif">Good Till</label>
      </div>
      <div class="actions">
        <button><svg width="20" height="16"><use href="#check"/></svg><span>Submit</span></button>
        <button><svg width="20" height="18"><use href="#dots"/></svg><span>Reset</span></button>
      </div>
    </div>
  </div>
</div>
</body>
</html>
```
FILE: styles.css
```css
* { box-sizing: border-box; }
body {
  margin: 0; min-height: 100vh; padding: 45px 0 47px;
  display: flex; flex-direction: column; background: #fff;
  font: 19px/24px "DejaVu Sans Condensed", "DejaVu Sans", sans-serif; color: #000;
}
button, input, select { font: inherit; color: inherit; margin: 0; }
button { padding: 0; border: 0; background: none; }
h2, h3, p { margin: 0; font: inherit; }
i, em { font-style: normal; }
svg { display: block; flex: none; }
table { border-collapse: collapse; table-layout: fixed; width: 100%; }
th, td { font-weight: 400; padding: 0; white-space: nowrap; overflow: hidden; }
a { color: inherit; text-decoration: none; }
.defs { position: absolute; }
.pos { color: #159015; }
.neg { color: #ee3030; }

.app {
  flex: 1; position: relative; display: flex; flex-direction: column;
  background: #ececee; border-top: 2px solid #666; border-bottom-left-radius: 10px;
}
.menubar { height: 39px; display: flex; justify-content: space-between; background: #f4f4f6; padding: 0 12px 3px; }
.menus, .session { display: flex; align-items: center; }
.menus { gap: 26px; }
.menus button { display: flex; align-items: center; gap: 6px; }
.menus svg { width: 9px; height: 6px; margin-top: 2px; }
.session a { display: flex; align-items: center; gap: 4px; margin-right: 51px; }
.session a + a { margin-right: 44px; }
.speaker { margin: 0 36px 0 8px; }

.workspace { flex: 1; display: flex; }
.sidebar { width: 485px; display: flex; flex-direction: column; gap: 4px; }
.gutter { width: 9px; padding-top: 714px; }
.collapse { width: 9px; height: 64px; border: 1px solid #ddd; border-radius: 8px 0 0 8px; background: #f1f1f3; }
.main { flex: 1; min-width: 0; display: flex; flex-direction: column; gap: 10px; }

.order { border: 2px solid #8ab5f0; background: #f4f4f6; }
.panel-head { height: 39px; padding: 0 8px 2px 12px; display: flex; align-items: center; justify-content: space-between; background: linear-gradient(#ececec, #d6d6d6); }
.panel-head h2 { font-weight: 700; }
.head-icons { display: flex; align-items: center; gap: 14px; }
.order-body { padding: 9px 8px 8px; display: flex; flex-direction: column; }
.symbol { position: relative; height: 88px; padding: 14px 32px 0 20px; border: 2px solid #c5c8d6; background: linear-gradient(#f0f1f4, #fff 14px); }
.symbol strong { display: block; font-size: 46px; line-height: 46px; font-weight: 400; }
.symbol p { display: flex; justify-content: space-between; line-height: 22px; padding-left: 1px; }
.symbol .desc { color: #a6a6a6; }
.change { display: flex; align-items: center; gap: 3px; color: #e23434; }
.change svg { color: #c01818; }
.symbol-chev { position: absolute; right: 7px; top: 38px; color: #555; }
.range { height: 16px; padding: 6px 0 0 17px; margin: 0 2px; background: linear-gradient(#dcdde6, #dcdde6) 0 7px / 100% 7px no-repeat; position: relative; }
.range i { display: block; width: 64%; height: 10px; background: #d9603f; border: 2px solid #7a1a0c; }
.range::before { content: ""; position: absolute; left: 12px; top: 3px; border: 5px solid transparent; border-top-color: #000; }
.ratio { display: flex; height: 10px; margin: 4px 0 3px; }
.ratio .buy { width: 75%; background: #acd433; border: 2px solid #1c5a0c; }
.ratio .sell { flex: 1; background: #d9603f; border: 2px solid #7a1a0c; }

.tiles { position: relative; display: flex; gap: 4px; }
.tile { position: relative; flex: 1; height: 164px; padding-top: 34px; display: flex; flex-direction: column; align-items: flex-start; border-radius: 7px; overflow: hidden; }
.sell-tile { background: #ca4624; border: 2px solid #6d0f0c; color: #fff; }
.buy-tile { background: #c3e65c; border: 2px solid #1c5a1c; color: #464646; }
.tag { position: absolute; top: 0; height: 22px; line-height: 20px; font-size: 18px; color: #fff; }
.sell-tile .tag { right: 0; width: 105px; text-align: right; padding-right: 9px; background: #8e2710; clip-path: polygon(0 0, 100% 0, 100% 100%, 21% 100%); }
.buy-tile .tag { left: 0; width: 105px; text-align: left; padding-left: 9px; background: #76991c; clip-path: polygon(0 0, 100% 0, 79% 100%, 0 100%); }
.handle { font-size: 28px; line-height: 26px; margin-left: 19px; }
.pips { display: flex; align-items: baseline; gap: 32px; height: 69px; margin-left: 46px; }
.pips b { font-size: 78px; line-height: 72px; font-weight: 400; }
.pips i { font-size: 27px; line-height: 27px; }
.side { align-self: center; font-size: 16px; line-height: 26px; }
.spread { position: absolute; left: 50%; top: 76px; width: 38px; height: 29px; margin-left: -19px; border: 2px solid #777; border-radius: 5px; background: #464b47; color: #fff; text-align: center; line-height: 25px; font-size: 18px; }
.place { display: flex; gap: 5px; margin: 7px 2px 11px; }
.place button { flex: 1; height: 36px; color: #fff; background: linear-gradient(#7396c6, #6389bd); border: 1px solid #4d6fa3; }
.amount { display: flex; justify-content: flex-end; align-items: center; height: 31px; margin-right: 2px; }
.swap { width: 22px; height: 15px; margin: 0 8px 0 9px; }
.spin { display: flex; width: 164px; height: 32px; border: 2px solid #b5b8c8; background: linear-gradient(#f0f0f0, #fff 6px); }
.spin input { flex: 1; min-width: 0; border: 0; padding: 0 5px 0 0; background: none; text-align: right; font-size: 18px; outline: 0; }
.steps { width: 27px; display: flex; flex-direction: column; border-left: 1px solid #b5b8c8; color: #2f5597; }
.steps button { flex: 1; display: flex; align-items: center; justify-content: center; background: #eef0f5; }
.steps button + button { border-top: 1px solid #b5b8c8; }
.steps svg, .drop svg, .pick svg { width: 15px; height: 9px; }
.drop { width: 28px; display: flex; align-items: center; justify-content: center; color: #555; border-left: 1px solid #b5b8c8; background: linear-gradient(#f4f4f4, #ccc); }
.spin.focus { border-color: #a6a6a6; }
.spin.focus .steps button { background: #cfe1f7; }
.toggle { display: flex; align-items: center; align-self: flex-end; gap: 5px; height: 24px; margin: 10px 3px 6px 0; }
.tick { display: flex; align-items: center; gap: 8px; line-height: 24px; white-space: nowrap; }
input[type=checkbox] { appearance: none; flex: none; width: 20px; height: 20px; border: 2px solid #999; background: #f6f6f6; }
.entry-group { position: relative; padding-left: 5px; }
.entry-group::before { content: ""; position: absolute; left: -2px; top: 13px; width: 5px; height: 80px; border: 2px solid #b2b2b2; border-right: 0; }
.fields { display: grid; height: 33px; }
.fields input:not([type=checkbox]) { min-width: 0; border: 2px solid #c8cad4; background: #f4f4f6; }
.entry-fields { grid-template-columns: 134px 118px 167px; gap: 7px; margin: 9px 0 7px 25px; }
.slip-fields { grid-template-columns: 159px 118px 167px; gap: 7px; }
.stop-fields { grid-template-columns: 155px 115px 164px; gap: 7px; padding-left: 5px; margin-bottom: 6px; }
.pick { position: relative; display: grid; }
.pick select { appearance: none; padding: 0 0 0 6px; border: 1px solid #ccced8; border-radius: 0; color: #8c8c8c; opacity: 1; background: linear-gradient(90deg, transparent calc(100% - 28px), #d2d2d6 calc(100% - 28px), #ececef calc(100% - 27px)), #fafafc; min-width: 0; }
.pick svg { position: absolute; right: 7px; top: 12px; color: #999; pointer-events: none; }
.price-group { position: relative; }
.price { display: flex; justify-content: flex-end; align-items: center; height: 36px; padding-right: 9px; }
.price .swap { margin-left: 7px; }
.price-group::after { content: ""; position: absolute; right: 3px; top: 20px; width: 5px; height: 74px; border: 2px solid #b2b2b2; border-left: 0; }
.actions { display: grid; grid-template-columns: 1fr 130px; gap: 4px; }
.actions button { display: flex; align-items: center; height: 36px; padding: 0 5px; border: 2px solid #c9c9cc; border-radius: 4px; background: linear-gradient(#fff, #ededed); }
.actions span { flex: 1; text-align: center; }
.order-body .actions { margin: 0 4px 0 -3px; }
.actions.off button { background: #e9e9ea; border-color: #d8d8da; color: #f8f8f8; }
.actions.off svg { opacity: .6; }
.depth-toggle { margin: 3px 4px 6px 0; }
.depth { width: calc(100% + 4px); margin: 0 -3px; border: 2px solid #cdcdd2; }
.depth th { height: 36px; border: 2px solid #cdcdd2; }
.depth td { height: 31px; border: 2px solid #e2e2e4; text-align: right; font-size: 18px; background-color: #fff; background-repeat: no-repeat; background-size: var(--d, 0) 100%; }
.depth td:nth-child(1) { padding-right: 28px; }
.depth td:nth-child(2) { padding-right: 36px; }
.depth td:nth-child(3), .depth td:nth-child(4) { padding-right: 10px; }
.depth tr:nth-child(odd) td { background-color: #f2f2f2; }
.depth .b { background-image: linear-gradient(#e8f3c8, #e8f3c8); background-position: right; }
.depth .a { background-image: linear-gradient(#eec6bc, #eec6bc); background-position: left; }
.depth td b, .quotes td b { font-size: 14px; }
.totals { display: grid; grid-template-columns: 1fr 1fr; margin: 3px -1px 0 -3px; border: 2px solid #cdcdd2; background: #fff; height: 32px; line-height: 28px; text-align: center; }
.totals b + b { border-left: 2px solid #cdcdd2; }

.instruments { flex: 1; border: 2px solid #d4d4d6; border-left-width: 1px; background: #f4f4f6; }
.instruments h3 { padding: 7px 12px 0; line-height: 24px; }
.filter-row { display: flex; align-items: center; gap: 9px; padding: 13px 4px 7px; }
.filter { display: flex; align-items: center; width: 246px; height: 32px; padding-left: 5px; border: 2px solid #b5b8c8; background: #fff; font-family: "Liberation Sans", Arial, sans-serif; }
.filter input { flex: 1; min-width: 0; border: 0; padding: 0 0 0 10px; background: none; font-size: 20px; }
.filter button { align-self: stretch; width: 28px; display: grid; place-items: center; border-left: 1px solid #c4c4c4; background: linear-gradient(#f0f0f0, #d4d4d4); color: #888; }
.q1 { width: 141px; } .q2 { width: 115px; } .q3 { width: 114px; }
.quotes th { height: 36px; border: 2px solid #d0d0d4; border-left: 0; }
.quotes th:last-child { border-right: 0; }
.quotes td { height: 31px; border: 2px solid #e0e0e2; border-left: 0; text-align: right; padding-right: 4px; background: #fcfcfc; }
.quotes td:first-child { color: #000; font-weight: 700; text-align: left; padding-left: 6px; border-left: 8px solid #7fbfbb; }
.quotes tr:nth-child(odd) td { background: #f3f3f3; }
.quotes tbody tr.picked td, .ptable tbody tr.picked td { background: #6f91bf; color: #fff; }
.arr { display: inline-block; width: 18px; height: 15px; margin-right: 11px; }
.quotes tr:nth-child(n+3) .arr { margin-right: 5px; }
.arr.up { color: #84ac28; } .arr.dn { color: #c01818; }

.chart { border: 2px solid #8ab5f0; background: #fff; }
.tabstrip { display: flex; justify-content: space-between; height: 36px; padding: 3px 0 0 4px; background: #dde8f7; border-bottom: 2px solid #cfcfd2; }
.chart-tab { display: flex; align-items: center; height: 33px; padding: 0 5px 2px 16px; border: 2px solid #cfcfd2; border-bottom: 0; border-radius: 6px 6px 0 0; background: #f4f4f6; color: #f96a16; }
.chart-tab span { margin: 0 15px 0 8px; }
.chart-tab button { width: 24px; height: 24px; margin-right: 6px; display: grid; place-items: center; border: 2px solid #dedede; border-radius: 5px; background: #fafafa; }
.chart-tab button:last-child { margin-right: 0; }
.strip-add { background: #e6e6ea; }
.toolbar { display: flex; gap: 7px; padding: 7px 4px 5px; border-bottom: 2px solid #ddd; }
.toolbar button { width: 56px; height: 45px; display: grid; place-items: center; border: 1px solid #dadada; border-width: 2px 2px 1px; background-color: #fff; font-family: "Liberation Sans", Arial, sans-serif; }
.toolbar .more { padding-right: 4px; background-image: linear-gradient(135deg, transparent 50%, #888 50%); background-size: 9px 9px; background-repeat: no-repeat; background-position: right 4px bottom 5px; }
.toolbar .w180 { width: 180px; place-items: center start; padding-left: 7px; }
.toolbar .w74 { width: 74px; } .toolbar .w73 { width: 73px; } .toolbar .w68 { width: 68px; } .toolbar .w55 { width: 55px; }
.toolbar .on { border-color: #999; background: #f4f6fc; }
.toolbar .fx { font: italic 700 22px/24px "Liberation Serif", serif; }

.plot-grid { display: grid; grid-template-columns: 1fr 81px; font-family: "Liberation Sans", Arial, sans-serif; color: #555; }
.plot { position: relative; border-bottom: 2px solid #444; }
.plot-svg { width: 100%; height: 791px; }
.ln path, .ln polyline { fill: none; vector-effect: non-scaling-stroke; stroke-width: 2px; }
.ln .cr { stroke: #d0685a; } .ln .cg { stroke: #6aa587; }
.ln .up { stroke: #2222dd; } .ln .mid { stroke: #1a821a; } .ln .low { stroke: #ee2020; }
.ln .cci { stroke: #222; } .ln .vol { stroke: #7d9cc0; }
.rings circle { fill: none; stroke: #6e6e6e; stroke-width: 2; }
.legend { position: absolute; left: 10px; display: flex; align-items: center; gap: 14px; color: #000; font-size: 20px; white-space: pre; }
.legend svg { color: #555; margin-right: -3px; }
.legend svg:first-of-type { margin-left: 8px; }
.ohlc { top: 11px; } .bands { top: 51px; } .cci-legend { top: 486px; } .vol-legend { top: 644px; }
.vol-legend span { color: #7093c4; }
.c-up { color: #00f; } .c-mid { color: #080; } .c-low { color: #f00; }
.order-line { position: absolute; left: 2px; top: 413px; display: flex; gap: 2px; color: #fff; }
.order-line span { height: 23px; padding: 0 6px; line-height: 23px; border-radius: 3px; background: #68a682; }
.order-line .grip { display: flex; align-items: center; gap: 13px; padding: 0 12px 0 3px; }
.preview { position: absolute; right: 42px; top: 415px; font-size: 16px; line-height: 20px; color: #6aa884; }
.scale { border-left: 2px solid #777; font-size: 16px; line-height: 20px; }
.pane { position: relative; display: flex; flex-direction: column; justify-content: space-between; padding-left: 6px; border-bottom: 2px solid #ddd; overflow: hidden; }
.p-main { height: 474px; padding-bottom: 11px; }
.slot { height: 20px; }
.p-cci { height: 157px; padding-top: 5px; }
.last-tick { margin-bottom: -10px; }
.p-vol { height: 162px; padding: 11px 0 8px 6px; border-bottom: 0; }
.pane .mark { position: absolute; left: 0; right: 0; padding-left: 1px; height: 24px; line-height: 20px; font-size: 16px; border: 2px solid #111; color: #fff; }
.p-main .mark { top: 415px; border-color: #14382a; background: #68a682; color: #000; font-size: 19px; }
.p-cci .mark { top: 85px; background: #111; height: 22px; line-height: 18px; }
.p-vol .mark { top: 145px; background: #6f91bf; border-color: #345; }
.times { display: grid; grid-template-columns: repeat(23, 1fr); margin: 0 -4px 0 -26px; height: 31px; line-height: 31px; font-size: 16px; text-align: center; }
.times b { font-size: 19px; }
.date { font-size: 15px; line-height: 31px; padding-left: 1px; }
.navigator { width: 100%; height: 66px; }

.positions { flex: 1; border: 2px solid #d0d0d3; background: #f4f4f6; }
.ptabs { display: flex; gap: 4px; height: 36px; padding: 2px 0 0 4px; background: #e9e9eb; border-bottom: 2px solid #cfcfd2; }
.ptabs button { width: 296px; height: 32px; padding-bottom: 2px; border: 2px solid #cfcfd2; border-bottom: 0; border-radius: 7px 7px 0 0; background: #efeff1; }
.ptabs .current { width: 230px; height: 34px; padding-bottom: 4px; background: #f4f4f6; }
.ptabs .third { width: 200px; }
.ptools { display: flex; align-items: center; height: 47px; padding-left: 4px; gap: 24px; }
.ptools .filter { width: 196px; margin-right: -3px; }
.ptools .filter input { padding-left: 9px; }
.ptools .boxed { width: 36px; height: 36px; margin: 0 -6px; display: grid; place-items: center; border: 2px solid #e2e2e4; border-radius: 5px; }
.p0 { width: 39px; } .p1 { width: 202px; } .p2 { width: 156px; } .p3 { width: 190px; } .p5 { width: 220px; }
.p6 { width: 160px; } .p7 { width: 165px; } .p8 { width: 164px; } .p9 { width: 238px; } .p10 { width: 49px; }
.ptable th { height: 37px; border: 2px solid #d0d0d0; border-left: 0; }
.ptable td { height: 32px; border-right: 2px solid #e4e4e4; border-bottom: 2px solid #e0e0e0; text-align: right; padding-right: 10px; font-size: 18px; background: #fcfcfc; }
.ptable td:nth-child(2) { padding-right: 15px; }
.ptable td:nth-child(4) { font-size: 19px; }
.ptable td:first-child, .ptable td:last-child { padding: 0; }
.ptable th input, .ptable td input, .ptable td svg { display: block; margin: 0 auto; }
.ptable input:checked { position: relative; border-color: #dbe6f5; background: #86a4cd; }
.ptable input:checked::before { content: ""; position: absolute; left: 5px; top: 1px; width: 6px; height: 11px; border: solid #fff; border-width: 0 3px 3px 0; transform: rotate(40deg); }
.ptable .picked svg { color: #f0f0f0; } .ptable .kill { color: #f44; }
.ptable .sort { position: relative; padding-right: 20px; }
.sort::after { content: ""; position: absolute; right: 11px; top: 15px; border: 7px solid transparent; border-top-color: #888; border-bottom: 0; }

.status { display: flex; align-items: center; height: 31px; padding-left: 8px; border-top: 2px solid #cfcfd2; background: linear-gradient(#ececec, #d0d0d0); border-bottom-left-radius: 10px; }
.status > span { padding-right: 9px; margin-right: 12px; border-right: 2px solid #bcbcbc; line-height: 25px; }
.status span > i { font-size: 18px; margin-left: 1px; }
.status .push { margin-left: auto; padding-right: 12px; margin-right: 16px; }
.status .conn { display: flex; align-items: center; gap: 8px; padding-right: 16px; margin-right: 16px; }
.lamp { width: 20px; height: 20px; background: #12a012; border: 1px solid #667; }
.status .last { border: 0; padding: 0; }
.status .tick { margin-left: 3px; }

.window { position: absolute; left: 1061px; top: 191px; width: 881px; min-height: 1159px; border-radius: 18px; overflow: hidden; background: #f5f5f7; box-shadow: 0 0 0 1px #555, 0 34px 74px 6px rgba(0, 0, 0, .62); }
.titlebar { display: flex; align-items: center; height: 47px; padding-left: 13px; gap: 13px; background: #3a3f41; border-bottom: 2px solid #1a1b1d; color: #b4b8ba; box-shadow: inset 0 1px #6a6e70; }
.titlebar i { width: 20px; height: 20px; border-radius: 50%; }
.titlebar .r { background: #ff5f57; } .titlebar .y { background: #febc2e; } .titlebar .g { background: #28c840; }
.titlebar b { margin-left: 1px; font: 700 21px/24px Inter, sans-serif; white-space: nowrap; }
.urlbar { display: flex; align-items: center; gap: 14px; height: 57px; padding-left: 9px; background: #202124; font: 23px/28px Inter, sans-serif; color: #8f9296; }
.urlbar em { color: #fff; }
.url { white-space: nowrap; }
.site { width: 38px; height: 38px; border-radius: 50%; background: #37393b; display: grid; place-items: center; }
.window-body { padding: 11px 10px; }
.dim { padding-right: 12px; border-color: #dcdeea; background: linear-gradient(#f4f5f8, #fbfbfd 14px); color: #5c5c5c; }
.dim .desc { color: #bcbcbc; }
.dim .change { color: #ee7c7c; } .dim .change svg { color: #d46a6a; }
.window .tiles { width: 413px; margin: 9px auto; }
.window .sell-tile { background: #c4c4c4; color: #464846; }
.window .buy-tile { background: #dadadc; border-color: #8faf93; color: #eee; }
.window .buy-tile .tag { background: #b7c983; color: #f2f5e8; }
.window .pips { gap: 8px; }
.window .side { margin-right: 4px; }
.corner { position: absolute; top: 1px; font-weight: 700; font-size: 18px; }
.sell-tile .corner { left: 8px; color: #f01414; }
.buy-tile .corner { right: 8px; }
.window .amount { margin-right: 5px; }
.wprice { display: grid; grid-template-columns: 1fr 605px; gap: 10px; align-items: center; margin: 12px 5px 10px 0; }
.wprice label { text-align: right; }
.wprice .spin { width: auto; }
.tif { display: grid; grid-template-columns: 213px 314px 1fr; padding-left: 4px; line-height: 24px; }
.tif label { display: flex; align-items: center; gap: 9px; }
.tif input { appearance: none; width: 20px; height: 20px; border: 2px solid #a9a9a9; border-radius: 50%; background: radial-gradient(#ddd 30%, #f8f8f8 60%); }
.tif input:checked { background: radial-gradient(circle at 7px 7px, #6ab4dc, #10527c 5px, transparent 6px), #eee; }
.window .actions { margin: 57px 5px 0; grid-template-columns: 1fr 131px; }
```
